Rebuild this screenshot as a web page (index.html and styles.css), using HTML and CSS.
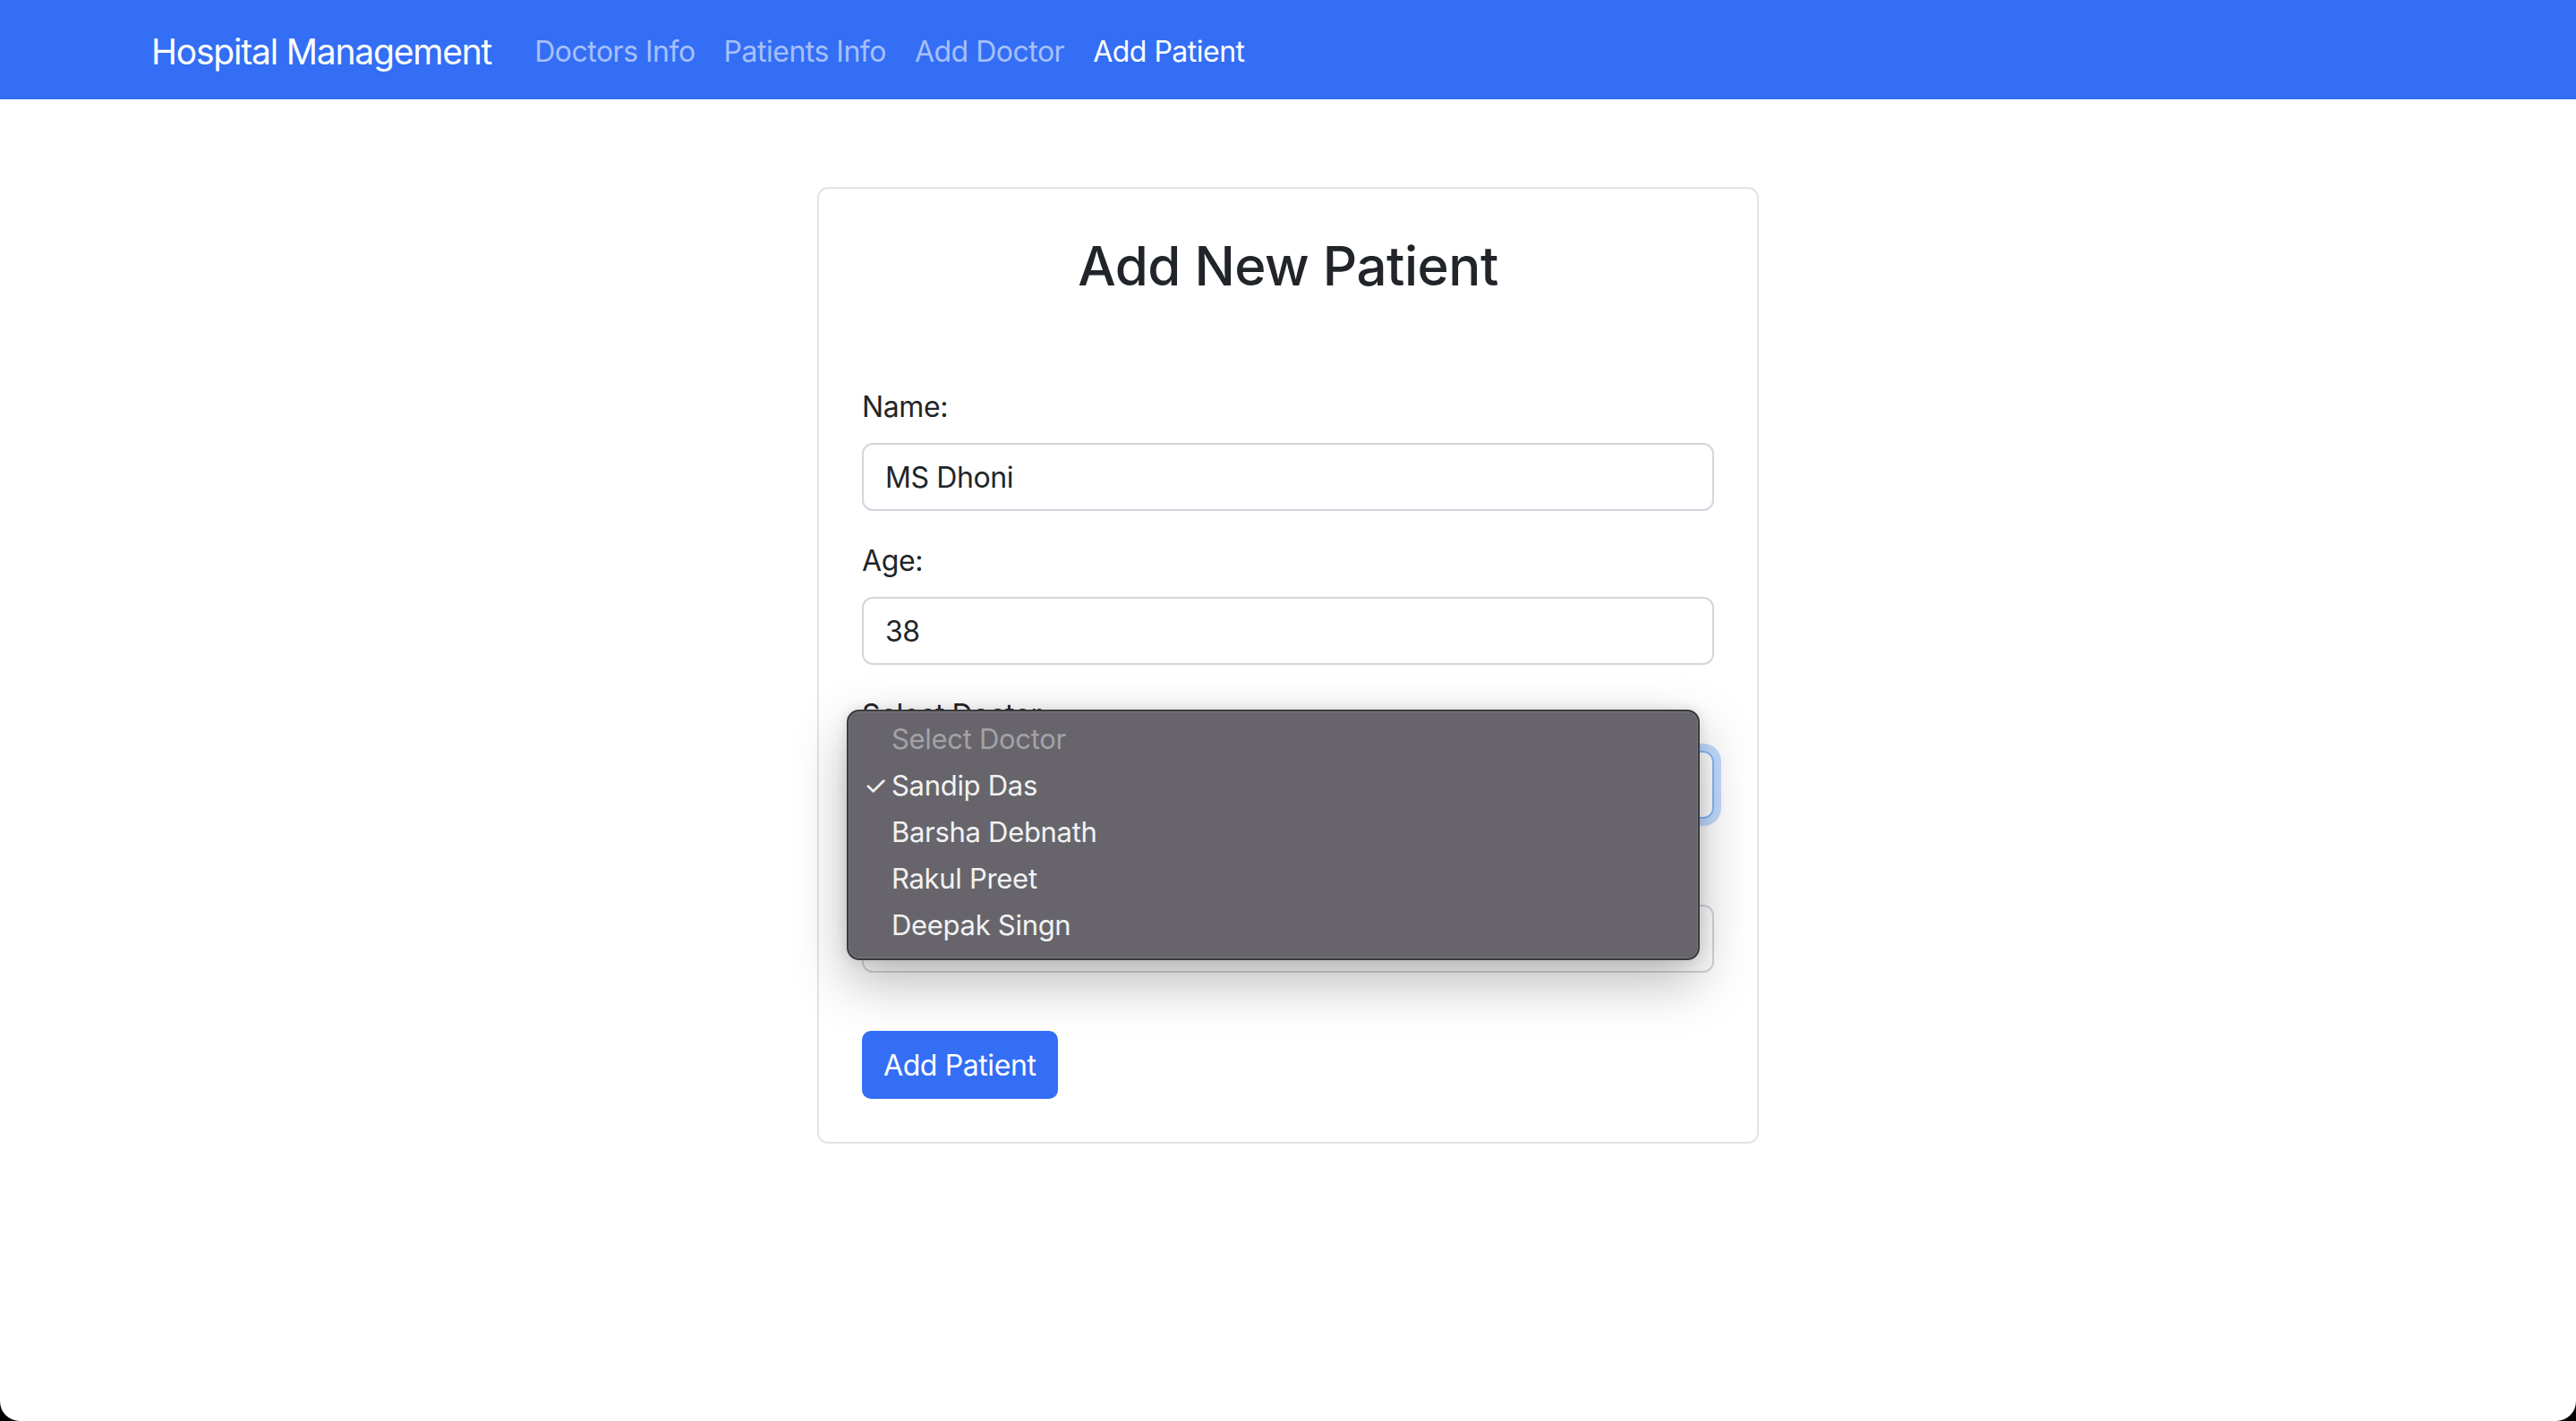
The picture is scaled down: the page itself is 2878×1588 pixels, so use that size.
FILE: index.html
```html
<!DOCTYPE html>
<html lang="en">
<head>
<meta charset="utf-8">
<title>Hospital Management</title>
<link rel="stylesheet" href="styles.css">
</head>
<body>
<nav class="navbar">
  <a class="brand" href="#">Hospital Management</a>
  <ul class="nav">
    <li><a class="nav-link" href="#">Doctors Info</a></li>
    <li><a class="nav-link" href="#">Patients Info</a></li>
    <li><a class="nav-link" href="#">Add Doctor</a></li>
    <li><a class="nav-link active" href="#">Add Patient</a></li>
  </ul>
</nav>
<main class="page">
  <section class="card">
    <h3 class="title">Add New Patient</h3>
    <form class="form">
      <div class="group">
        <label class="label">Name:</label>
        <div class="input">MS Dhoni</div>
      </div>
      <div class="group">
        <label class="label">Age:</label>
        <div class="input">38</div>
      </div>
      <div class="group select-group">
        <label class="label">Select Doctor:</label>
        <div class="input select focus">Sandip Das</div>
        <div class="popup">
          <div class="opt placeholder">Select Doctor</div>
          <div class="opt"><span class="check">✓</span>Sandip Das</div>
          <div class="opt">Barsha Debnath</div>
          <div class="opt">Rakul Preet</div>
          <div class="opt">Deepak Singn</div>
        </div>
      </div>
      <div class="group">
        <label class="label">Disease:</label>
        <div class="input"></div>
      </div>
      <div class="actions">
        <button type="button" class="btn">Add Patient</button>
      </div>
    </form>
  </section>
</main>
</body>
</html>
```
FILE: styles.css
```css
html {
  background: #000;
}
body {
  margin: 0;
  min-height: 1588px;
  background: #fff;
  border-radius: 0 0 22px 22px;
  font-family: Inter, "Liberation Sans", sans-serif;
  color: #212529;
  font-size: 32px;
}
.navbar {
  height: 111px;
  background: #336ef5;
  display: flex;
  align-items: center;
  padding: 4px 0 0 169px;
  box-sizing: border-box;
}
.brand {
  color: #fff;
  font-size: 39px;
  text-decoration: none;
  letter-spacing: -1.2px;
  margin-right: 32px;
}
.nav {
  display: flex;
  list-style: none;
  margin: 0;
  padding: 0;
}
.nav-link {
  display: block;
  padding: 0 16px;
  color: rgba(255, 255, 255, 0.58);
  text-decoration: none;
  font-size: 32px;
  letter-spacing: -0.5px;
}
.nav-link.active {
  color: #fff;
}
.page {
  display: flex;
  justify-content: center;
  padding-top: 98px;
}
.card {
  width: 1052px;
  box-sizing: border-box;
  border: 2px solid #e0e3e7;
  border-radius: 12px;
  padding: 48px;
}
.title {
  margin: 5px 0 100px;
  text-align: center;
  font-size: 60px;
  font-weight: 500;
  line-height: 67px;
  letter-spacing: -0.5px;
}
.form {
  margin: 0;
}
.group {
  margin-bottom: 32px;
}
.select-group {
  position: relative;
}
.label {
  display: block;
  line-height: 48px;
  margin-bottom: 16px;
  letter-spacing: -0.4px;
}
.input {
  height: 76px;
  box-sizing: border-box;
  border: 2px solid #d2d6dc;
  border-radius: 12px;
  padding: 0 24px;
  display: flex;
  align-items: center;
  letter-spacing: -0.4px;
}
.input.focus {
  border-color: #86b7fe;
  box-shadow: 0 0 0 8px rgba(13, 110, 253, 0.25);
}
.popup {
  position: absolute;
  left: -17px;
  top: 18px;
  width: 953px;
  height: 280px;
  box-sizing: border-box;
  padding-top: 5px;
  background: #67656b;
  border: 2px solid #3a393d;
  border-radius: 14px;
  box-shadow: inset 0 0 0 1px rgba(255, 255, 255, 0.12), 0 24px 60px rgba(0, 0, 0, 0.28), 0 0 14px rgba(0, 0, 0, 0.12);
}
.opt {
  position: relative;
  height: 52px;
  line-height: 52px;
  padding-left: 48px;
  color: #f2f2f3;
  font-size: 31px;
  letter-spacing: -0.3px;
}
.opt.placeholder {
  color: #a3a2a7;
}
.check {
  position: absolute;
  left: 17px;
  font-size: 30px;
  font-weight: 400;
}
.actions {
  padding-top: 33px;
}
.btn {
  display: block;
  height: 76px;
  padding: 0 24px;
  border: none;
  border-radius: 10px;
  background: #336ef5;
  color: #fff;
  font-family: inherit;
  font-size: 32px;
  letter-spacing: -0.4px;
}
```
